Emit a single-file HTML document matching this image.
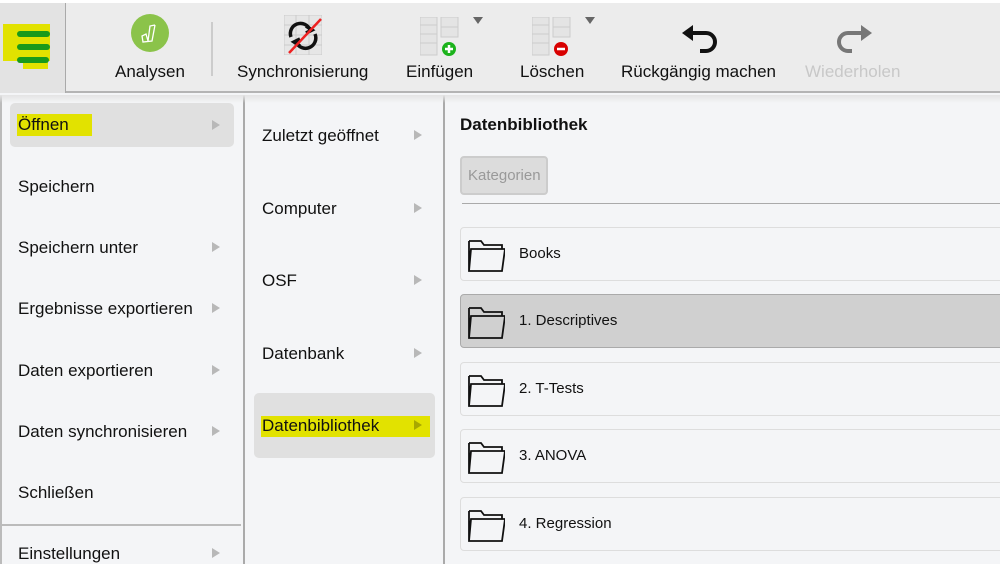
<!DOCTYPE html>
<html><head><meta charset="utf-8"><style>
*{margin:0;padding:0;box-sizing:border-box}
body{width:1000px;height:564px;overflow:hidden;background:#f4f5f7;font-family:"Liberation Sans",sans-serif;position:relative;color:#111}
.abs{position:absolute}
#tb{left:0;top:0;width:1000px;height:93px;background:#ececec;border-bottom:2px solid #b4b4b4;border-top:3px solid #fff}
.tl{position:absolute;top:59px;font-size:17px;color:#111;white-space:nowrap}
.mi{position:absolute;font-size:17px;white-space:nowrap}
.arr{position:absolute;width:0;height:0;border-top:5px solid transparent;border-bottom:5px solid transparent;border-left:8px solid #b8b8b8}
.item{position:absolute;left:460px;width:560px;height:54px;border:1px solid #ddd;border-radius:4px;background:#f4f5f7}
.item span{position:absolute;left:58px;top:17px;font-size:15px}
.item svg{position:absolute;left:6px;top:9px}
</style></head><body>
<div id="tb" class="abs">
 <div class="abs" style="left:0;top:0;width:66px;height:90px;background:#e3e3e3;border-right:1px solid #aaa"></div>
 <div class="abs" style="left:3px;top:21px;width:47px;height:37px;background:#e2e200"></div>
 <div class="abs" style="left:23px;top:55px;width:25px;height:11px;background:#e2e200"></div>
 <div class="abs" style="left:17px;top:28px;width:33px;height:6px;border-radius:3px;background:#1a9a1a"></div>
 <div class="abs" style="left:17px;top:41px;width:33px;height:6px;border-radius:3px;background:#1a9a1a"></div>
 <div class="abs" style="left:17px;top:54px;width:32px;height:6px;border-radius:3px;background:#1a9a1a"></div>
 <svg class="abs" style="left:131px;top:11px" width="38" height="38"><circle cx="19" cy="19" r="19" fill="#8bc34a"/><path d="M24 11 L21 27 L12 28 L11 22 L15 20 L17 27 M24 11 L19 12 L17 27" stroke="#fff" fill="none" stroke-width="1.3"/></svg>
 <div class="tl" style="left:115px">Analysen</div>
 <div class="abs" style="left:211px;top:19px;width:2px;height:54px;background:#ccc"></div>
 <svg class="abs" style="left:284px;top:12px" width="38" height="40"><rect x="0" y="0" width="38" height="40" fill="#e6e6e6" stroke="#ccc"/><path d="M0 10H38M0 20H38M0 30H38M12 0V40M25 0V40" stroke="#ccc"/><path d="M7 22 A10 10 0 0 1 26 15 M22 11 l6 4 -6 3 M31 19 A10 10 0 0 1 12 27 M16 31 l-6 -4 6 -3" stroke="#111" stroke-width="3.5" fill="none"/><path d="M5 38 L37 4" stroke="#e22" stroke-width="2.5"/></svg>
 <div class="tl" style="left:237px">Synchronisierung</div>
 <svg class="abs" style="left:420px;top:14px" width="40" height="42"><rect x="0" y="0" width="17" height="38" fill="#e4e4e4" stroke="#ccc"/><path d="M0 8H17M0 17H17M0 26H17" stroke="#ccc"/><rect x="21" y="0" width="17" height="20" fill="#e4e4e4" stroke="#ccc"/><path d="M21 10H38" stroke="#ccc"/><circle cx="29" cy="32" r="7" fill="#1cb31c"/><path d="M25 32H33M29 28V36" stroke="#fff" stroke-width="2.5"/></svg>
 <div class="abs" style="left:473px;top:14px;border-left:5px solid transparent;border-right:5px solid transparent;border-top:7px solid #666"></div>
 <div class="tl" style="left:406px">Einfügen</div>
 <svg class="abs" style="left:532px;top:14px" width="40" height="42"><rect x="0" y="0" width="17" height="38" fill="#e4e4e4" stroke="#ccc"/><path d="M0 8H17M0 17H17M0 26H17" stroke="#ccc"/><rect x="21" y="0" width="17" height="20" fill="#e4e4e4" stroke="#ccc"/><path d="M21 10H38" stroke="#ccc"/><circle cx="29" cy="32" r="7" fill="#d80000"/><path d="M25 32H33" stroke="#fff" stroke-width="2.5"/></svg>
 <div class="abs" style="left:585px;top:14px;border-left:5px solid transparent;border-right:5px solid transparent;border-top:7px solid #666"></div>
 <div class="tl" style="left:520px">Löschen</div>
 <svg class="abs" style="left:680px;top:18px" width="42" height="36"><path d="M10 12 H26 A8 8 0 0 1 26 30 H20" stroke="#111" stroke-width="4" fill="none"/><path d="M2 12 L13 4 V20Z" fill="#111"/></svg>
 <div class="tl" style="left:621px">Rückgängig machen</div>
 <svg class="abs" style="left:832px;top:18px" width="42" height="36"><path d="M32 12 H16 A8 8 0 0 0 16 30 H20" stroke="#777" stroke-width="4" fill="none"/><path d="M40 12 L29 4 V20Z" fill="#777"/></svg>
 <div class="tl" style="left:805px;color:#c8c8c8">Wiederholen</div>
</div>
<div class="abs" style="left:243px;top:95px;width:2px;height:469px;background:#aaa"></div>
<div class="abs" style="left:443px;top:95px;width:2px;height:469px;background:#aaa"></div>
<div class="abs" style="left:0;top:95px;width:2px;height:469px;background:#bbb"></div>
<div class="abs" style="left:0;top:95px;width:1000px;height:8px;background:linear-gradient(#e4e4e4,rgba(244,245,247,0))"></div>
<div class="abs" style="left:10px;top:103px;width:224px;height:44px;border-radius:5px;background:#e0e0e0"></div>
<div class="abs" style="left:17px;top:114px;width:75px;height:22px;background:#e2e200"></div>
<div class="mi" style="left:18px;top:115px">Öffnen</div><div class="arr" style="left:212px;top:120px"></div>
<div class="mi" style="left:18px;top:177px">Speichern</div>
<div class="mi" style="left:18px;top:238px">Speichern unter</div><div class="arr" style="left:212px;top:242px"></div>
<div class="mi" style="left:18px;top:299px">Ergebnisse exportieren</div><div class="arr" style="left:212px;top:303px"></div>
<div class="mi" style="left:18px;top:361px">Daten exportieren</div><div class="arr" style="left:212px;top:365px"></div>
<div class="mi" style="left:18px;top:422px">Daten synchronisieren</div><div class="arr" style="left:212px;top:426px"></div>
<div class="mi" style="left:18px;top:483px">Schließen</div>
<div class="abs" style="left:2px;top:524px;width:239px;height:2px;background:#bbb"></div>
<div class="mi" style="left:18px;top:544px">Einstellungen</div><div class="arr" style="left:212px;top:548px"></div>

<div class="mi" style="left:262px;top:126px">Zuletzt geöffnet</div><div class="arr" style="left:414px;top:130px"></div>
<div class="mi" style="left:262px;top:199px">Computer</div><div class="arr" style="left:414px;top:203px"></div>
<div class="mi" style="left:262px;top:271px">OSF</div><div class="arr" style="left:414px;top:275px"></div>
<div class="mi" style="left:262px;top:344px">Datenbank</div><div class="arr" style="left:414px;top:348px"></div>
<div class="abs" style="left:254px;top:393px;width:181px;height:65px;border-radius:5px;background:#e0e0e0"></div>
<div class="abs" style="left:261px;top:416px;width:169px;height:21px;background:#e2e200"></div>
<div class="mi" style="left:262px;top:416px">Datenbibliothek</div><div class="arr" style="left:414px;top:420px;border-left-color:#a8a800"></div>

<div class="abs" style="left:460px;top:115px;font-size:17px;font-weight:bold">Datenbibliothek</div>
<div class="abs" style="left:460px;top:156px;width:88px;height:39px;border:2px solid #ccc;border-radius:4px;background:#dcdcdc;color:#999;font-size:15px;padding:9px 0 0 6px">Kategorien</div>
<div class="abs" style="left:462px;top:203px;width:538px;height:1px;background:#aaa"></div>
<div class="item" style="top:227px"><svg width="38" height="36"><path d="M2 4 h12 l3 4 h18 v4 M2 4 v30 h33 l3 -22 h-34 l-2 22" stroke="#111" stroke-width="1.8" fill="none"/></svg><span>Books</span></div>
<div class="item" style="top:294px;background:#d0d0d0;border-color:#aaa"><svg width="38" height="36"><path d="M2 4 h12 l3 4 h18 v4 M2 4 v30 h33 l3 -22 h-34 l-2 22" stroke="#111" stroke-width="1.8" fill="none"/></svg><span>1. Descriptives</span></div>
<div class="item" style="top:362px"><svg width="38" height="36"><path d="M2 4 h12 l3 4 h18 v4 M2 4 v30 h33 l3 -22 h-34 l-2 22" stroke="#111" stroke-width="1.8" fill="none"/></svg><span>2. T-Tests</span></div>
<div class="item" style="top:429px"><svg width="38" height="36"><path d="M2 4 h12 l3 4 h18 v4 M2 4 v30 h33 l3 -22 h-34 l-2 22" stroke="#111" stroke-width="1.8" fill="none"/></svg><span>3. ANOVA</span></div>
<div class="item" style="top:497px"><svg width="38" height="36"><path d="M2 4 h12 l3 4 h18 v4 M2 4 v30 h33 l3 -22 h-34 l-2 22" stroke="#111" stroke-width="1.8" fill="none"/></svg><span>4. Regression</span></div>
</body></html>
